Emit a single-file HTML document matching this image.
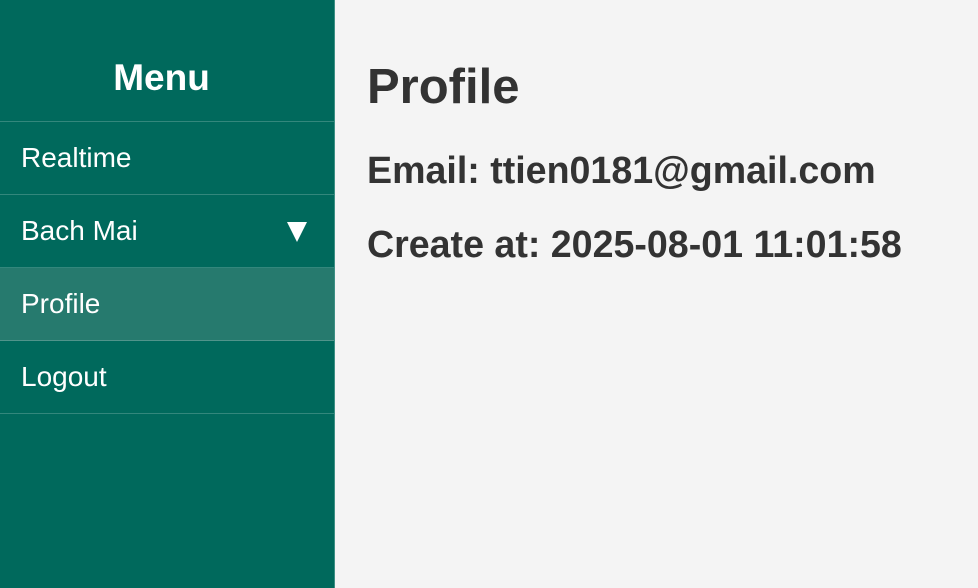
<!DOCTYPE html>
<html><head><meta charset="utf-8"><style>
*{margin:0;padding:0;box-sizing:border-box}
body{width:978px;height:588px;background:#f4f4f4;font-family:"Liberation Sans",Arial,sans-serif;overflow:hidden;position:relative}
.sb{position:absolute;left:0;top:0;width:335px;height:588px;background:#00695c;color:#fff;border-right:1px solid #3d8f84}
.sb h1{font-size:37px;font-weight:bold;text-align:center;padding-right:11px;height:122px;line-height:155px;border-bottom:1px solid rgba(255,255,255,0.2)}
.it{height:73px;line-height:72px;padding-left:21px;font-size:28px;border-bottom:1px solid rgba(255,255,255,0.2);position:relative}
.it.a{background:#267a6e}
.tri{position:absolute;left:287px;top:27px;width:0;height:0;border-left:10px solid transparent;border-right:10px solid transparent;border-top:20px solid #fff}
.m{position:absolute;left:367px;top:0;color:#333;font-weight:bold}
.m h2{font-size:49px;line-height:1;position:absolute;top:63px;white-space:nowrap}
.m p{font-size:37.6px;line-height:1;position:absolute;white-space:nowrap}
</style></head><body>
<div class="sb">
<h1>Menu</h1>
<div class="it">Realtime</div>
<div class="it">Bach Mai<span class="tri"></span></div>
<div class="it a">Profile</div>
<div class="it">Logout</div>
</div>
<div class="m">
<h2>Profile</h2>
<p style="top:152px">Email: ttien0181@gmail.com</p>
<p style="top:226px">Create at: 2025-08-01 11:01:58</p>
</div>
</body></html>
